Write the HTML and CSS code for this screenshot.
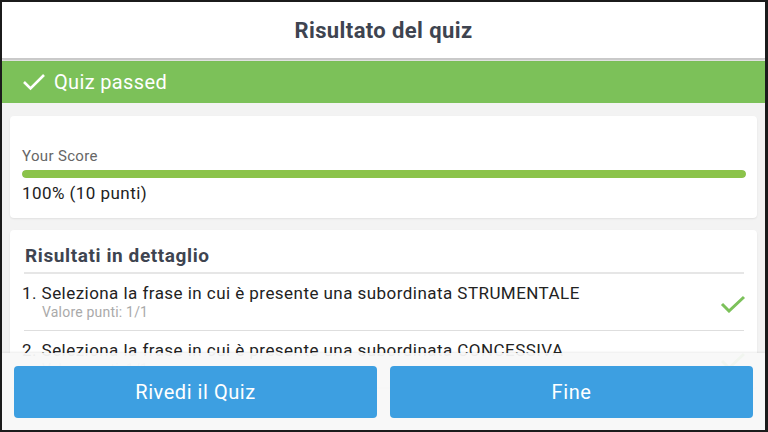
FILE: index.html
```html
<!DOCTYPE html>
<html lang="it">
<head>
    <meta charset="UTF-8">
    <meta name="viewport" content="width=device-width, initial-scale=1.0">
    <title>Risultato del quiz</title>
    <link rel="stylesheet" href="styles.css">
</head>
<body>
    <div class="screen">
        <div class="top-bar">Risultato del quiz</div>
        <div class="status-banner">
            <svg class="banner-check" width="24" height="20" viewBox="0 0 24 20">
                <polyline points="2,10 8.5,16.5 22,3" fill="none" stroke="#fff" stroke-width="2.6"/>
            </svg>
            <span>Quiz passed</span>
        </div>

        <div class="content">
            <div class="card score-card">
                <div class="score-label">Your Score</div>
                <div class="progress"><div class="progress-fill" style="width: 100%"></div></div>
                <div class="score-value">100% (10 punti)</div>
            </div>

            <div class="card details-card">
                <div class="details-title">Risultati in dettaglio</div>
                <div class="result-row">
                    <div class="result-text">
                        <div class="question">1. Seleziona la frase in cui è presente una subordinata STRUMENTALE</div>
                        <div class="points">Valore punti: 1/1</div>
                    </div>
                    <svg class="row-check" width="26" height="18" viewBox="0 0 26 18">
                        <polyline points="2,9 9,16 24,2" fill="none" stroke="#7cc15a" stroke-width="3"/>
                    </svg>
                </div>
                <div class="result-row">
                    <div class="result-text">
                        <div class="question">2. Seleziona la frase in cui è presente una subordinata CONCESSIVA</div>
                        <div class="points">Valore punti: 1/1</div>
                    </div>
                    <svg class="row-check" width="26" height="18" viewBox="0 0 26 18">
                        <polyline points="2,9 9,16 24,2" fill="none" stroke="#7cc15a" stroke-width="3"/>
                    </svg>
                </div>
            </div>
        </div>

        <div class="footer">
            <button class="btn">Rivedi il Quiz</button>
            <button class="btn">Fine</button>
        </div>
    </div>
</body>
</html>
```

FILE: styles.css
```css
html, body {
    margin: 0;
    height: 100%;
}

body {
    font-family: Roboto, "Liberation Sans", sans-serif;
    background-color: #1b1b1b;
}

.screen {
    position: relative;
    box-sizing: border-box;
    height: 432px;
    border-style: solid;
    border-color: #1b1b1b;
    border-width: 2px 3px 2px 2px;
    background-color: #f3f3f3;
    overflow: hidden;
    display: flex;
    flex-direction: column;
}

.top-bar {
    height: 56px;
    flex-shrink: 0;
    background-color: #fff;
    color: #3e4450;
    font-size: 22px;
    font-weight: bold;
    letter-spacing: 0.4px;
    display: flex;
    align-items: center;
    justify-content: center;
    border-bottom: 1px solid #c9c9c9;
    box-shadow: 0 1px 2px rgba(0, 0, 0, 0.25);
    position: relative;
    z-index: 1;
}

.status-banner {
    height: 42px;
    flex-shrink: 0;
    margin-top: 2px;
    background-color: #7cc159;
    color: #fff;
    font-size: 20px;
    letter-spacing: 0.35px;
    display: flex;
    align-items: center;
    padding-left: 20px;
    gap: 8px;
}

.content {
    padding: 13px 8px 0;
    display: flex;
    flex-direction: column;
    gap: 12px;
}

.card {
    background-color: #fff;
    border-radius: 4px;
    box-shadow: 0 1px 2px rgba(0, 0, 0, 0.08);
}

.score-card {
    height: 102px;
    box-sizing: border-box;
    padding: 30px 11px 0 12px;
}

.score-label {
    font-size: 15px;
    letter-spacing: 0.35px;
    color: #666;
    line-height: 20px;
}

.progress {
    height: 8px;
    margin-top: 4px;
    border-radius: 4px;
    background-color: #e6e6e6;
    overflow: hidden;
}

.progress-fill {
    height: 100%;
    border-radius: 4px;
    background-color: #8bc34a;
}

.score-value {
    font-size: 17px;
    letter-spacing: 0.45px;
    color: #222;
    line-height: 20px;
    margin-top: 5px;
}

.details-card {
    padding: 0 13px 0 12px;
}

.details-title {
    font-size: 19px;
    font-weight: bold;
    letter-spacing: 0.6px;
    color: #3e4450;
    padding: 14px 0 0 1px;
    height: 28px;
    border-bottom: 2px solid #e6e6e6;
    margin-left: 2px;
}

.result-row {
    display: flex;
    align-items: center;
    padding: 9px 0 9px;
    border-bottom: 1px solid #dedede;
    margin-left: 2px;
}

.result-text {
    flex: 1;
}

.question {
    font-size: 17px;
    letter-spacing: 0.45px;
    line-height: 20px;
    color: #222;
    margin-left: -2px;
}

.points {
    font-size: 14px;
    letter-spacing: 0.2px;
    line-height: 18px;
    color: #aaa;
    padding-left: 18px;
}

.row-check {
    margin-top: 4px;
    margin-right: -2px;
}

.footer {
    position: absolute;
    left: 0;
    right: 0;
    bottom: 0;
    height: 77px;
    box-sizing: border-box;
    padding: 13px 12px 12px;
    display: flex;
    gap: 13px;
    background-color: rgba(248, 248, 248, 0.95);
    box-shadow: 0 -1px 2px rgba(0, 0, 0, 0.08);
}

.btn {
    flex: 1;
    border: none;
    border-radius: 4px;
    background-color: #3d9fe1;
    color: #fff;
    font-family: inherit;
    font-size: 20px;
    letter-spacing: 0.55px;
}
```
